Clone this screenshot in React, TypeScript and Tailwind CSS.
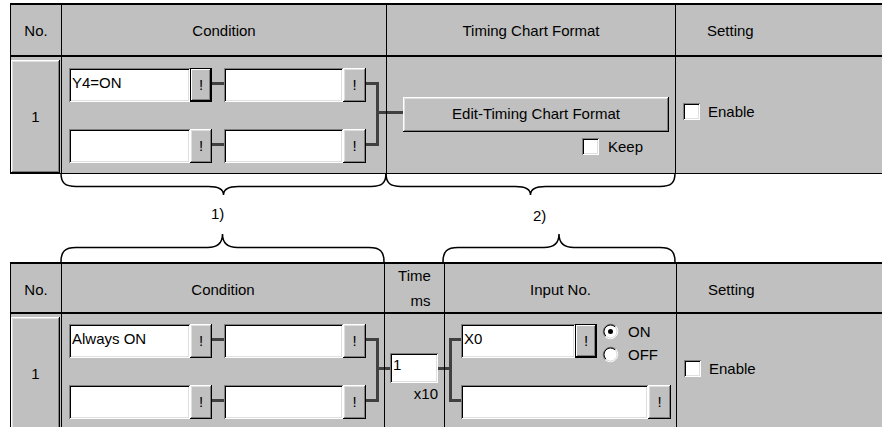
import React from "react";

const raised =
  "bg-[#c0c0c0] shadow-[inset_-1px_-1px_#000,inset_1px_1px_#fff,inset_-2px_-2px_#808080,inset_2px_2px_#dfdfdf]";
const raisedDef =
  "bg-[#c0c0c0] shadow-[inset_0_0_0_1px_#000,inset_-2px_-2px_#000,inset_2px_2px_#fff,inset_-3px_-3px_#808080]";
const sunken =
  "bg-white shadow-[inset_1px_1px_#808080,inset_-1px_-1px_#fff,inset_2px_2px_#000,inset_-2px_-2px_#dfdfdf]";
const wire = "bg-[#404040]";

function Field({ className, text = "" }: { className: string; text?: string }) {
  return (
    <div
      className={`${sunken} ${className} shrink-0 h-[34px] pl-[3px] pt-[6px] leading-[17px] whitespace-nowrap overflow-hidden`}
    >
      {text}
    </div>
  );
}

function Bang({ className, def = false }: { className: string; def?: boolean }) {
  return (
    <div
      className={`${def ? raisedDef : raised} ${className} shrink-0 h-[34px] flex items-center justify-center leading-none pb-[2px]`}
    >
      !
    </div>
  );
}

function Check() {
  return <div className={`${sunken} w-[17px] h-[17px] shrink-0`} />;
}

function Radio({ checked }: { checked: boolean }) {
  return (
    <svg width="17" height="17" viewBox="0 0 17 17" className="shrink-0">
      <circle cx="8.5" cy="8.5" r="6.5" fill="#fff" />
      <path d="M3.2 13.8 A7.5 7.5 0 0 1 13.8 3.2" stroke="#808080" strokeWidth="1" fill="none" />
      <path d="M13.8 3.2 A7.5 7.5 0 0 1 3.2 13.8" stroke="#ffffff" strokeWidth="1" fill="none" />
      <path d="M3.9 13.1 A6.5 6.5 0 0 1 13.1 3.9" stroke="#000" strokeWidth="1" fill="none" />
      <path d="M13.1 3.9 A6.5 6.5 0 0 1 3.9 13.1" stroke="#dfdfdf" strokeWidth="1" fill="none" />
      {checked && <circle cx="8.5" cy="8.5" r="2.5" fill="#000" />}
    </svg>
  );
}

function CondRow({ text = "", def = false }: { text?: string; def?: boolean }) {
  return (
    <div className="flex h-[34px] items-start">
      <Field className="w-[121px]" text={text} />
      <Bang className="w-[22px]" def={def} />
      <div className={`${wire} w-[12px] h-[3px] mt-[14px] shrink-0`} />
      <Field className="w-[119px]" />
      <Bang className="w-[23px]" />
    </div>
  );
}

function Bracket({ width, r1, r2, mid }: { width: number; r1: number; r2: number; mid: number }) {
  return (
    <svg width={width} height="116" className="shrink-0">
      <rect x="0" y={r1} width="13" height="3" fill="#404040" />
      <rect x="0" y={r2} width="13" height="3" fill="#404040" />
      <rect x="10" y={r1} width="3" height={r2 - r1 + 3} fill="#404040" />
      <rect x="10" y={mid} width={width - 10} height="3" fill="#404040" />
    </svg>
  );
}

function brace(x0: number, x1: number, yEnd: number, yH: number, yTip: number) {
  const xm = (x0 + x1) / 2;
  const dy = yH - yEnd;
  const dt = yTip - yH;
  return [
    `M${x0} ${yEnd}`,
    `C${x0} ${yEnd + 0.75 * dy} ${x0 + 4} ${yH} ${x0 + 15} ${yH}`,
    `L${xm - 15} ${yH}`,
    `C${xm - 5} ${yH} ${xm} ${yH + 0.35 * dt} ${xm} ${yTip}`,
    `C${xm} ${yH + 0.35 * dt} ${xm + 5} ${yH} ${xm + 15} ${yH}`,
    `L${x1 - 15} ${yH}`,
    `C${x1 - 4} ${yH} ${x1} ${yEnd + 0.75 * dy} ${x1} ${yEnd}`,
  ].join(" ");
}

export default function App() {
  return (
    <div className="w-[882px] h-[427px] overflow-hidden bg-white text-black text-[15px] leading-[17px] font-['Liberation_Sans',Arial,sans-serif] pt-[3px] flex flex-col">
      {/* Top table */}
      <div className="ml-[10px] w-[872px] border-t-2 border-l border-black bg-[#c0c0c0] shrink-0">
        <div className="flex h-[52px] border-b-2 border-black">
          <div className="w-[51px] border-r border-black flex items-center justify-center">No.</div>
          <div className="w-[325px] border-r border-black flex items-center justify-center">Condition</div>
          <div className="w-[289px] border-r border-black flex items-center justify-center">Timing Chart Format</div>
          <div className="flex-1 flex items-center pl-[31px]">Setting</div>
        </div>
        <div className="flex h-[117px] border-b border-black">
          <div className="w-[51px] border-r border-black pt-[3px]">
            <div className={`${raised} w-[49px] h-[113px] flex items-center justify-center`}>1</div>
          </div>
          <div className="w-[325px] border-r border-black flex pl-[7px]">
            <div className="flex flex-col pt-[11px] gap-[27px]">
              <CondRow text="Y4=ON" def />
              <CondRow />
            </div>
            <Bracket width={20} r1={25} r2={86} mid={54} />
          </div>
          <div className="w-[289px] border-r border-black flex flex-col pt-[40px]">
            <div className="flex items-start">
              <div className={`${wire} w-[16px] h-[3px] mt-[14px] shrink-0`} />
              <div className={`${raised} w-[266px] h-[35px] flex items-center justify-center pb-[3px]`}>
                Edit-Timing Chart Format
              </div>
            </div>
            <div className="flex items-center mt-[6px] pl-[195px]">
              <Check />
              <span className="ml-[9px]">Keep</span>
            </div>
          </div>
          <div className="flex-1 pl-[7px] pt-[46px]">
            <div className="flex items-center">
              <Check />
              <span className="ml-[8px]">Enable</span>
            </div>
          </div>
        </div>
      </div>

      {/* Braces */}
      <div className="relative h-[88px] w-[882px] shrink-0">
        <svg width="882" height="88" className="overflow-visible" fill="none" stroke="#000" strokeWidth="1.5">
          <path d={brace(61, 386, -1, 12.5, 21)} />
          <path d={brace(386, 675, -1, 12.5, 21)} />
          <path d={brace(61, 384, 88, 73.5, 60)} />
          <path d={brace(443, 675, 88, 73.5, 60)} />
        </svg>
        <div className="absolute left-[211px] top-[31px]">1)</div>
        <div className="absolute left-[533px] top-[33px]">2)</div>
      </div>

      {/* Bottom table */}
      <div className="ml-[10px] w-[872px] border-t-2 border-l border-black bg-[#c0c0c0] shrink-0">
        <div className="flex h-[50px] border-b-2 border-black">
          <div className="w-[51px] border-r border-black flex items-center justify-center pt-[3px]">No.</div>
          <div className="w-[323px] border-r border-black flex items-center justify-center pt-[3px]">Condition</div>
          <div className="w-[60px] border-r border-black flex flex-col items-center pt-[3px]">
            <span>Time</span>
            <span className="mt-[8px] pl-[12px]">ms</span>
          </div>
          <div className="w-[232px] border-r border-black flex items-center justify-center pt-[3px]">Input No.</div>
          <div className="flex-1 flex items-center pl-[31px] pt-[3px]">Setting</div>
        </div>
        <div className="flex h-[117px] border-b border-black">
          <div className="w-[51px] border-r border-black pt-[3px]">
            <div className={`${raised} w-[49px] h-[113px] flex items-center justify-center`}>1</div>
          </div>
          <div className="w-[323px] border-r border-black flex pl-[7px]">
            <div className="flex flex-col pt-[10px] gap-[27px]">
              <CondRow text="Always ON" />
              <CondRow />
            </div>
            <Bracket width={18} r1={24} r2={85} mid={53} />
          </div>
          <div className="w-[60px] border-r border-black flex flex-col pt-[39px]">
            <div className="flex items-start">
              <div className={`${wire} w-[5px] h-[3px] mt-[14px] shrink-0`} />
              <div className={`${sunken} w-[48px] h-[30px] pl-[3px] pt-[3px] shrink-0`}>1</div>
              <div className={`${wire} w-[6px] h-[3px] mt-[14px] shrink-0`} />
            </div>
            <div className="mt-[2px] text-right pr-[6px]">x10</div>
          </div>
          <div className="w-[232px] border-r border-black flex">
            <svg width="16" height="116" className="shrink-0">
              <rect x="0" y="53" width="5" height="3" fill="#404040" />
              <rect x="4" y="24" width="3" height="64" fill="#404040" />
              <rect x="4" y="24" width="12" height="3" fill="#404040" />
              <rect x="4" y="85" width="12" height="3" fill="#404040" />
            </svg>
            <div className="flex flex-col pt-[10px] gap-[27px]">
              <div className="flex h-[34px] items-start">
                <Field className="w-[114px]" text="X0" />
                <Bang className="w-[22px]" def />
                <div className="ml-[5px] -mt-[1px] flex flex-col gap-[6px]">
                  <div className="flex items-center h-[17px]">
                    <Radio checked />
                    <span className="ml-[9px]">ON</span>
                  </div>
                  <div className="flex items-center h-[17px]">
                    <Radio checked={false} />
                    <span className="ml-[9px]">OFF</span>
                  </div>
                </div>
              </div>
              <div className="flex h-[34px] items-start">
                <Field className="w-[187px]" />
                <Bang className="w-[23px]" />
              </div>
            </div>
          </div>
          <div className="flex-1 pl-[7px] pt-[46px]">
            <div className="flex items-center">
              <Check />
              <span className="ml-[8px]">Enable</span>
            </div>
          </div>
        </div>
      </div>
    </div>
  );
}
